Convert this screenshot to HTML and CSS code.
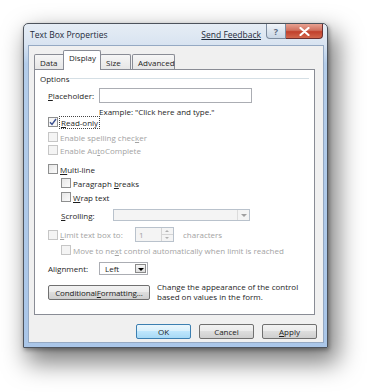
FILE: index.html
```html
<!DOCTYPE html>
<html lang="en">

<head>
    <meta charset="UTF-8">
    <meta name="viewport" content="width=device-width, initial-scale=1.0">
    <title>Text Box Properties</title>
    <link rel="stylesheet" href="styles.css">
</head>

<body>
    <div class="window">
        <div class="titlebar">
            <span class="title">Text Box Properties</span>
            <a class="feedback">Send Feedback</a>
            <div class="caption-buttons">
                <span class="btn-help">?</span>
                <span class="btn-close">
                    <svg width="11" height="9" viewBox="0 0 11 9">
                        <path d="M1.5 1 L9.5 8 M9.5 1 L1.5 8" stroke="#fff" stroke-width="2.2" stroke-linecap="round" />
                    </svg>
                </span>
            </div>
        </div>

        <div class="face">
            <div class="tabs">
                <span class="tab">Data</span>
                <span class="tab active">Display</span>
                <span class="tab">Size</span>
                <span class="tab">Advanced</span>
            </div>

            <div class="panel">
                <div class="legend"><span>Options</span></div>

                <div class="row field-row">
                    <label class="label"><u>P</u>laceholder:</label>
                    <span class="textbox wide"></span>
                </div>
                <div class="row example">Example: "Click here and type."</div>

                <div class="row check-row">
                    <span class="check checked">
                        <svg width="8" height="8" viewBox="0 0 8 8">
                            <path d="M1 4.2 L3 6.5 L7 1" fill="none" stroke="#3a4f8f" stroke-width="1.4" />
                        </svg>
                    </span>
                    <span class="focus"><u>R</u>ead-only</span>
                </div>
                <div class="row check-row disabled gap3">
                    <span class="check"></span>
                    <span>Enable spelling chec<u>k</u>er</span>
                </div>
                <div class="row check-row disabled gap1">
                    <span class="check"></span>
                    <span>Enable Au<u>t</u>oComplete</span>
                </div>

                <div class="row check-row gap7">
                    <span class="check"></span>
                    <span><u>M</u>ulti-line</span>
                </div>
                <div class="row check-row indent gap2">
                    <span class="check"></span>
                    <span>Paragraph <u>b</u>reaks</span>
                </div>
                <div class="row check-row indent gap2">
                    <span class="check"></span>
                    <span><u>W</u>rap text</span>
                </div>
                <div class="row field-row indent gap6 scroll-row">
                    <label class="label scroll-label"><u>S</u>crolling:</label>
                    <span class="select disabled-box scroll-select"><span class="drop"></span></span>
                </div>

                <div class="row check-row disabled gap6 limit-row">
                    <span class="check"></span>
                    <span class="limit-label"><u>L</u>imit text box to:</span>
                    <span class="spin disabled-box">
                        <span class="spin-value">1</span>
                        <span class="spin-arrows">
                            <span class="up"></span>
                            <span class="down"></span>
                        </span>
                    </span>
                    <span>characters</span>
                </div>
                <div class="row check-row disabled indent gap2">
                    <span class="check"></span>
                    <span>Move to ne<u>x</u>t control automatically when limit is reached</span>
                </div>

                <div class="row field-row gap5">
                    <label class="label">Ali<u>g</u>nment:</label>
                    <span class="select align-select">
                        <span class="select-value">Left</span>
                        <span class="drop dark"></span>
                    </span>
                </div>

                <div class="cond-row">
                    <span class="button cond-button">Conditional <u>F</u>ormatting...</span>
                    <span class="cond-text">Change the appearance of the control<br>based on values in the form.</span>
                </div>
            </div>

            <div class="actions">
                <span class="button default">OK</span>
                <span class="button">Cancel</span>
                <span class="button"><u>A</u>pply</span>
            </div>
        </div>
    </div>
</body>

</html>
```

FILE: styles.css
```css
* {
    box-sizing: border-box;
}

html,
body {
    min-height: 392px;
}

body {
    margin: 0;
    padding: 23px 0 0 23px;
    background-color: #ffffff;
    font-family: "Open Sans", "Noto Sans", sans-serif;
    font-size: 8px;
    color: #1e1e1e;
}

u {
    text-decoration: underline;
    text-underline-offset: 1px;
}

.window {
    width: 305px;
    height: 325px;
    border: 1px solid #4d535c;
    border-radius: 5px 5px 0 0;
    background: linear-gradient(180deg, #e6edf5 0px, #d9e4f1 20px, #b4cdea 40px, #aac6e8 100%);
    box-shadow: 7px 12px 24px 3px rgba(0, 0, 0, 0.5), 1px 2px 4px rgba(0, 0, 0, 0.35);
    display: flex;
    flex-direction: column;
}

.titlebar {
    height: 21px;
    display: flex;
    align-items: flex-start;
    padding-left: 6px;
}

.title {
    margin-top: 5px;
    font-size: 8.5px;
    color: #1e2a3a;
}

.feedback {
    margin-left: auto;
    margin-top: 5px;
    margin-right: 5px;
    font-size: 8.5px;
    color: #1e2a3a;
    text-decoration: underline;
}

.caption-buttons {
    display: flex;
    margin-right: 4px;
}

.btn-help {
    width: 20px;
    height: 15px;
    border: 1px solid #7d8c9f;
    border-top: none;
    border-radius: 0 0 0 4px;
    background: linear-gradient(180deg, #f2f5f9 0%, #dce5ef 50%, #c9d6e5 100%);
    color: #5a6a80;
    font-size: 9px;
    font-weight: bold;
    display: flex;
    align-items: center;
    justify-content: center;
}

.btn-close {
    width: 37px;
    height: 15px;
    border: 1px solid #6b2f2f;
    border-left: none;
    border-top: none;
    border-radius: 0 0 4px 0;
    background: linear-gradient(180deg, #e8a191 0%, #d0715f 45%, #c1402c 55%, #d2664c 100%);
    display: flex;
    align-items: center;
    justify-content: center;
}

.face {
    flex: 1;
    margin: 0 3px 4px 4px;
    border: 1px solid #95a9c3;
    background-color: #f0f0f0;
    padding: 4px 8px 0 5px;
    display: flex;
    flex-direction: column;
}

.tabs {
    display: flex;
    align-items: flex-end;
    height: 19px;
    position: relative;
    z-index: 1;
}

.tab {
    height: 15px;
    padding: 0 5px;
    border: 1px solid #898c95;
    border-bottom: none;
    border-radius: 2px 2px 0 0;
    background: linear-gradient(180deg, #f6f6f6, #e6e6e6);
    display: flex;
    align-items: center;
    margin-right: -1px;
}

.tab:first-child {
    width: 32px;
}

.tab.active {
    width: 38px;
    margin: 0 -1px -1px -2px;
    background: #ffffff;
    align-items: flex-start;
    padding-top: 1px;
    height: 20px;
}

.tab:nth-child(3) {
    width: 31px;
    margin-right: 1px;
}

.tab:nth-child(4) {
    width: 43px;
}

.panel {
    height: 246px;
    border: 1px solid #898c95;
    background-color: #ffffff;
    padding: 3px 5px 0 13px;
}

.legend {
    height: 10px;
    display: flex;
    align-items: center;
    margin-left: -8px;
}

.legend::after {
    content: "";
    flex: 1;
    border-top: 1px solid #d5dfe5;
}

.row {
    height: 12px;
    display: flex;
    align-items: center;
}

.field-row {
    height: 15px;
    margin-top: 5px;
}

.label {
    width: 51px;
}

.textbox {
    height: 15px;
    border: 1px solid #abadb3;
    background: #ffffff;
}

.wide {
    width: 153px;
}

.example {
    height: 10px;
    margin-top: 3px;
    padding-left: 51px;
}

.check-row {
    gap: 2px;
}

.check {
    width: 10px;
    height: 10px;
    border: 1px solid #8e8f8f;
    background: linear-gradient(135deg, #e6e6e6, #fbfbfb);
    display: flex;
    align-items: center;
    justify-content: center;
    flex-shrink: 0;
}

.check.checked {
    background: #f6f6f6;
}

.focus {
    outline: 1px dotted #444;
    padding: 0 1px;
    line-height: 11px;
}

.disabled {
    color: #a3a3a3;
}

.disabled .check {
    border-color: #c6c6c6;
    background: #f4f4f4;
}

.gap1 {
    margin-top: 1px;
}

.gap2 {
    margin-top: 2px;
}

.gap3 {
    margin-top: 3px;
}

.gap5 {
    margin-top: 5px;
}

.gap6 {
    margin-top: 6px;
}

.gap7 {
    margin-top: 7px;
}

.indent {
    padding-left: 13px;
}

.scroll-row {
    height: 12px;
}

.scroll-label {
    width: 52px;
}

.select {
    height: 12px;
    border: 1px solid #abadb3;
    display: flex;
    align-items: stretch;
    justify-content: flex-end;
    background: #ffffff;
}

.disabled-box {
    border-color: #b9c2cc;
    background: #f4f4f4;
}

.scroll-select {
    width: 137px;
}

.drop {
    width: 12px;
    border-left: 1px solid #dcdcdc;
    position: relative;
}

.drop::after {
    content: "";
    position: absolute;
    left: 3px;
    top: 4px;
    border: 3px solid transparent;
    border-top: 3px solid #a0a0a0;
    border-bottom: none;
}

.drop.dark {
    margin: 1px;
    width: 11px;
    border: 1px solid #8a8a8a;
    background: linear-gradient(180deg, #f5f5f5, #dedede);
}

.drop.dark::after {
    left: 2px;
    top: 3px;
    border-top-color: #000;
}

.limit-row {
    height: 15px;
}

.limit-label {
    width: 73px;
}

.spin {
    width: 39px;
    height: 15px;
    border: 1px solid #b9c2cc;
    display: flex;
    margin-right: 7px;
}

.spin-value {
    flex: 1;
    padding-left: 3px;
    display: flex;
    align-items: center;
}

.spin-arrows {
    width: 12px;
    display: flex;
    flex-direction: column;
    border-left: 1px solid #d5d5d5;
}

.spin-arrows span {
    flex: 1;
    position: relative;
}

.spin-arrows .up {
    border-bottom: 1px solid #d5d5d5;
}

.spin-arrows .up::after,
.spin-arrows .down::after {
    content: "";
    position: absolute;
    left: 3px;
    top: 2px;
    border: 2px solid transparent;
}

.spin-arrows .up::after {
    border-bottom: 2px solid #b0b0b0;
    border-top: none;
}

.spin-arrows .down::after {
    border-top: 2px solid #b0b0b0;
    border-bottom: none;
}

.align-select {
    width: 49px;
    height: 13px;
    justify-content: space-between;
}

.select-value {
    padding-left: 5px;
    display: flex;
    align-items: center;
}

.cond-row {
    display: flex;
    align-items: center;
    margin-top: 6px;
    gap: 7px;
}

.button {
    height: 15px;
    border: 1px solid #707070;
    border-radius: 2px;
    background: linear-gradient(180deg, #f2f2f2 0%, #ebebeb 45%, #dddddd 50%, #cfcfcf 100%);
    display: flex;
    align-items: center;
    justify-content: center;
}

.cond-button {
    width: 102px;
    letter-spacing: -0.1px;
    word-spacing: 1px;
    white-space: nowrap;
}

.cond-text {
    line-height: 10px;
}

.actions {
    display: flex;
    justify-content: flex-end;
    gap: 8px;
    margin-top: 9px;
    margin-right: -2px;
}

.actions .button {
    width: 55px;
}

.actions .default {
    border-color: #3c7fb1;
    background: linear-gradient(180deg, #eaf6fd 0%, #d9f0fc 45%, #bee6fd 50%, #a7d9f5 100%);
}
```
